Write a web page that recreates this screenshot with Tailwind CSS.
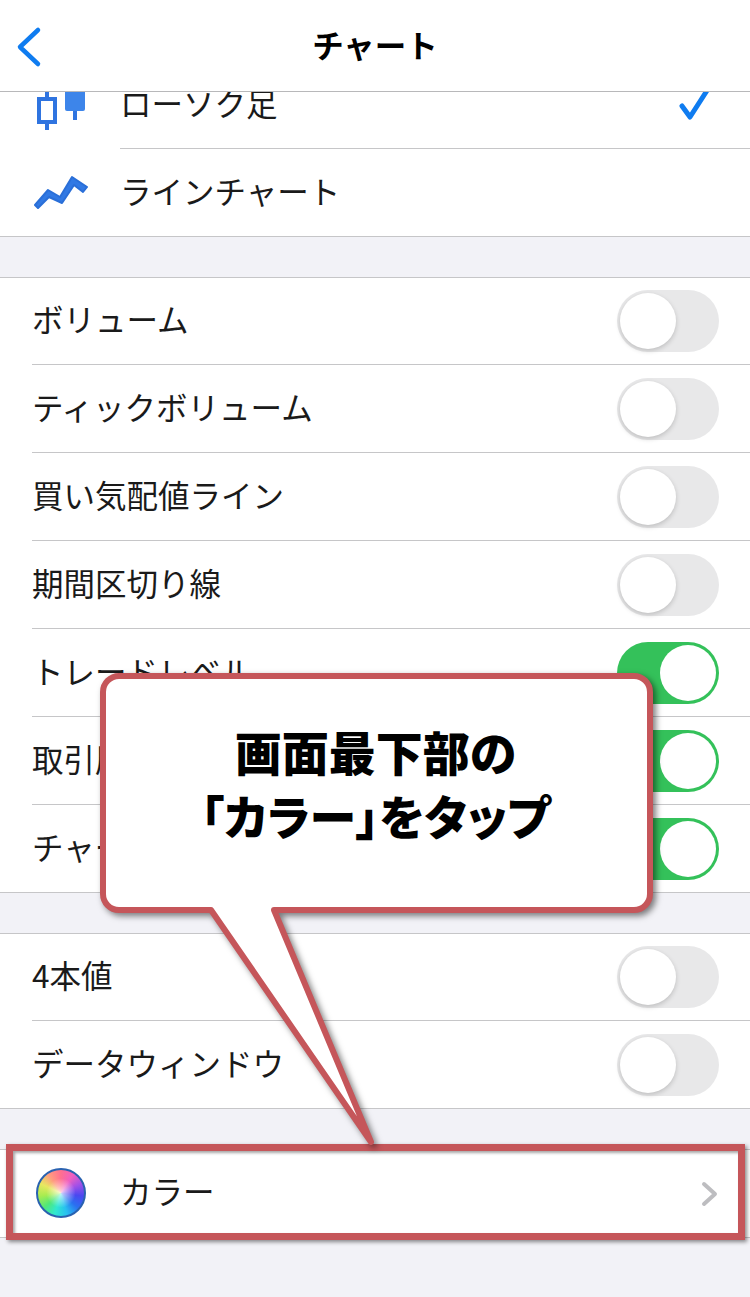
<!DOCTYPE html>
<html lang="ja">
<head>
    <meta charset="UTF-8">
    <meta name="viewport" content="width=device-width, initial-scale=1.0">
    <title>チャート</title>
    <script src="https://cdn.jsdelivr.net/npm/@tailwindcss/browser@4"></script>
</head>
<body class="relative w-[750px] h-[1297px] overflow-hidden bg-[#f2f2f7] text-[31.5px] text-[#1a1a1a] font-['Noto_Sans_CJK_JP','Noto_Sans',sans-serif]">
    <!-- nav bar -->
    <header class="relative z-10 h-[92px] bg-white border-b border-[#b8b8ba] flex items-center justify-center">
        <svg class="absolute left-[16px] top-[26px]" width="26" height="42" viewBox="0 0 26 42" fill="none" stroke="#0f7cf0" stroke-width="4.5" stroke-linecap="round" stroke-linejoin="round"><path d="M22 4 L4 21 L22 38"/></svg>
        <h1 class="text-[31.5px] font-bold text-black -mt-[2px]">チャート</h1>
    </header>

    <!-- chart type -->
    <section class="-mt-[32px] bg-white border-b border-[#c6c6c8]">
        <div class="h-[88px] flex items-center relative">
            <svg class="absolute left-[36px] top-[0px]" width="52" height="72" viewBox="0 0 52 72">
                <rect x="9" y="30" width="4" height="40" fill="#2f74e0"/>
                <rect x="3" y="39" width="16" height="23" fill="#fff" stroke="#2f74e0" stroke-width="4"/>
                <rect x="37" y="45" width="4" height="15" fill="#2f74e0"/>
                <rect x="29" y="20" width="20" height="31" rx="2" fill="#3d85ea"/>
            </svg>
            <span class="ml-[120px] -mt-[3px]">ローソク足</span>
            <svg class="absolute left-[676px] top-[26px]" width="38" height="36" viewBox="0 0 38 36" fill="none" stroke="#0f7cf0" stroke-width="5" stroke-linecap="round" stroke-linejoin="round"><path d="M6 20 L14 31 L32 3"/></svg>
        </div>
        <div class="ml-[120px] h-px bg-[#c6c6c8]"></div>
        <div class="h-[87px] flex items-center relative">
            <svg class="absolute left-[34px] top-[26px]" width="54" height="34" viewBox="0 0 54 34"><path d="M1 30 L14 15 L26 22 L38 2 L53 12 L49 17 L40 10 L28 28 L15 22 L4 33 Z" fill="#3179e4" stroke="#2a6fd8" stroke-width="2" stroke-linejoin="round"/></svg>
            <span class="ml-[120px] -mt-[3px]">ラインチャート</span>
        </div>
    </section>

    <!-- indicators -->
    <section class="mt-[40px] bg-white border-y border-[#c6c6c8]">
        <div class="h-[86px] pl-[32px] pr-[31px] flex items-center justify-between"><span class="-mt-[4px]">ボリューム</span><span class="w-[102px] h-[62px] rounded-full bg-[#e8e8e9] p-[3px] flex"><span class="w-[56px] h-[56px] rounded-full bg-white shadow-[0_2px_5px_rgba(0,0,0,0.18)]"></span></span></div>
        <div class="ml-[32px] h-px bg-[#c6c6c8]"></div>
        <div class="h-[87px] pl-[32px] pr-[31px] flex items-center justify-between"><span class="-mt-[4px]">ティックボリューム</span><span class="w-[102px] h-[62px] rounded-full bg-[#e8e8e9] p-[3px] flex"><span class="w-[56px] h-[56px] rounded-full bg-white shadow-[0_2px_5px_rgba(0,0,0,0.18)]"></span></span></div>
        <div class="ml-[32px] h-px bg-[#c6c6c8]"></div>
        <div class="h-[87px] pl-[32px] pr-[31px] flex items-center justify-between"><span class="-mt-[4px]">買い気配値ライン</span><span class="w-[102px] h-[62px] rounded-full bg-[#e8e8e9] p-[3px] flex"><span class="w-[56px] h-[56px] rounded-full bg-white shadow-[0_2px_5px_rgba(0,0,0,0.18)]"></span></span></div>
        <div class="ml-[32px] h-px bg-[#c6c6c8]"></div>
        <div class="h-[87px] pl-[32px] pr-[31px] flex items-center justify-between"><span class="-mt-[4px]">期間区切り線</span><span class="w-[102px] h-[62px] rounded-full bg-[#e8e8e9] p-[3px] flex"><span class="w-[56px] h-[56px] rounded-full bg-white shadow-[0_2px_5px_rgba(0,0,0,0.18)]"></span></span></div>
        <div class="ml-[32px] h-px bg-[#c6c6c8]"></div>
        <div class="h-[87px] pl-[32px] pr-[31px] flex items-center justify-between"><span class="-mt-[4px]">トレードレベル</span><span class="w-[102px] h-[62px] rounded-full bg-[#34c15a] p-[3px] flex justify-end"><span class="w-[56px] h-[56px] rounded-full bg-white"></span></span></div>
        <div class="ml-[32px] h-px bg-[#c6c6c8]"></div>
        <div class="h-[87px] pl-[32px] pr-[31px] flex items-center justify-between"><span class="-mt-[4px]">取引履歴</span><span class="w-[102px] h-[62px] rounded-full bg-[#34c15a] p-[3px] flex justify-end"><span class="w-[56px] h-[56px] rounded-full bg-white"></span></span></div>
        <div class="ml-[32px] h-px bg-[#c6c6c8]"></div>
        <div class="h-[87px] pl-[32px] pr-[31px] flex items-center justify-between"><span class="-mt-[4px]">チャート</span><span class="w-[102px] h-[62px] rounded-full bg-[#34c15a] p-[3px] flex justify-end"><span class="w-[56px] h-[56px] rounded-full bg-white"></span></span></div>
    </section>

    <section class="mt-[40px] bg-white border-y border-[#c6c6c8]">
        <div class="h-[86px] pl-[32px] pr-[31px] flex items-center justify-between"><span class="-mt-[4px]">4本値</span><span class="w-[102px] h-[62px] rounded-full bg-[#e8e8e9] p-[3px] flex"><span class="w-[56px] h-[56px] rounded-full bg-white shadow-[0_2px_5px_rgba(0,0,0,0.18)]"></span></span></div>
        <div class="ml-[32px] h-px bg-[#c6c6c8]"></div>
        <div class="h-[87px] pl-[32px] pr-[31px] flex items-center justify-between"><span class="-mt-[4px]">データウィンドウ</span><span class="w-[102px] h-[62px] rounded-full bg-[#e8e8e9] p-[3px] flex"><span class="w-[56px] h-[56px] rounded-full bg-white shadow-[0_2px_5px_rgba(0,0,0,0.18)]"></span></span></div>
    </section>

    <!-- colour row -->
    <section class="mt-[40px] bg-white border-y border-[#c6c6c8] h-[89px] flex items-center relative">
        <span class="absolute left-[36px] top-[18px] w-[50px] h-[50px] rounded-full border-2 border-[#2a62b0] bg-[radial-gradient(circle,rgba(255,255,255,0.75),rgba(255,255,255,0)_45%),conic-gradient(#ff6f90,#f060c0,#a050e8,#4a48f0,#2a70f0,#28c0f0,#30e8d0,#50e878,#a8ec50,#e8e860,#ff9a80,#ff6f90)]"></span>
        <span class="ml-[120px] -mt-[6px]">カラー</span>
        <svg class="absolute left-[700px] top-[31px]" width="20" height="26" viewBox="0 0 20 26" fill="none" stroke="#bdbdc0" stroke-width="4" stroke-linecap="round" stroke-linejoin="round"><path d="M4 3 L15 13 L4 23"/></svg>
    </section>

    <!-- annotation overlay -->
    <div class="absolute left-[6px] top-[1144px] w-[739px] h-[96px] z-20 border-[7px] border-[#c5565a] shadow-[2px_2px_4px_rgba(0,0,0,0.45),inset_2px_2px_3px_rgba(0,0,0,0.35)]"></div>
    <svg class="absolute left-0 top-0 z-30 drop-shadow-[3px_3px_3px_rgba(0,0,0,0.5)]" width="750" height="1297" viewBox="0 0 750 1297">
        <path d="M119 676 H634 a16 16 0 0 1 16 16 V894 a16 16 0 0 1 -16 16 H274 L371 1142 L211 910 H119 a16 16 0 0 1 -16 -16 V692 a16 16 0 0 1 16 -16 Z" fill="#fff" stroke="#c5565a" stroke-width="6" stroke-linejoin="round"/>
    </svg>
    <div class="absolute left-[102px] top-[719px] w-[547px] z-40 text-center font-black text-[47px] leading-[64px] text-black [font-feature-settings:'palt']">画面最下部の<br>「カラー」をタップ</div>
</body>
</html>
